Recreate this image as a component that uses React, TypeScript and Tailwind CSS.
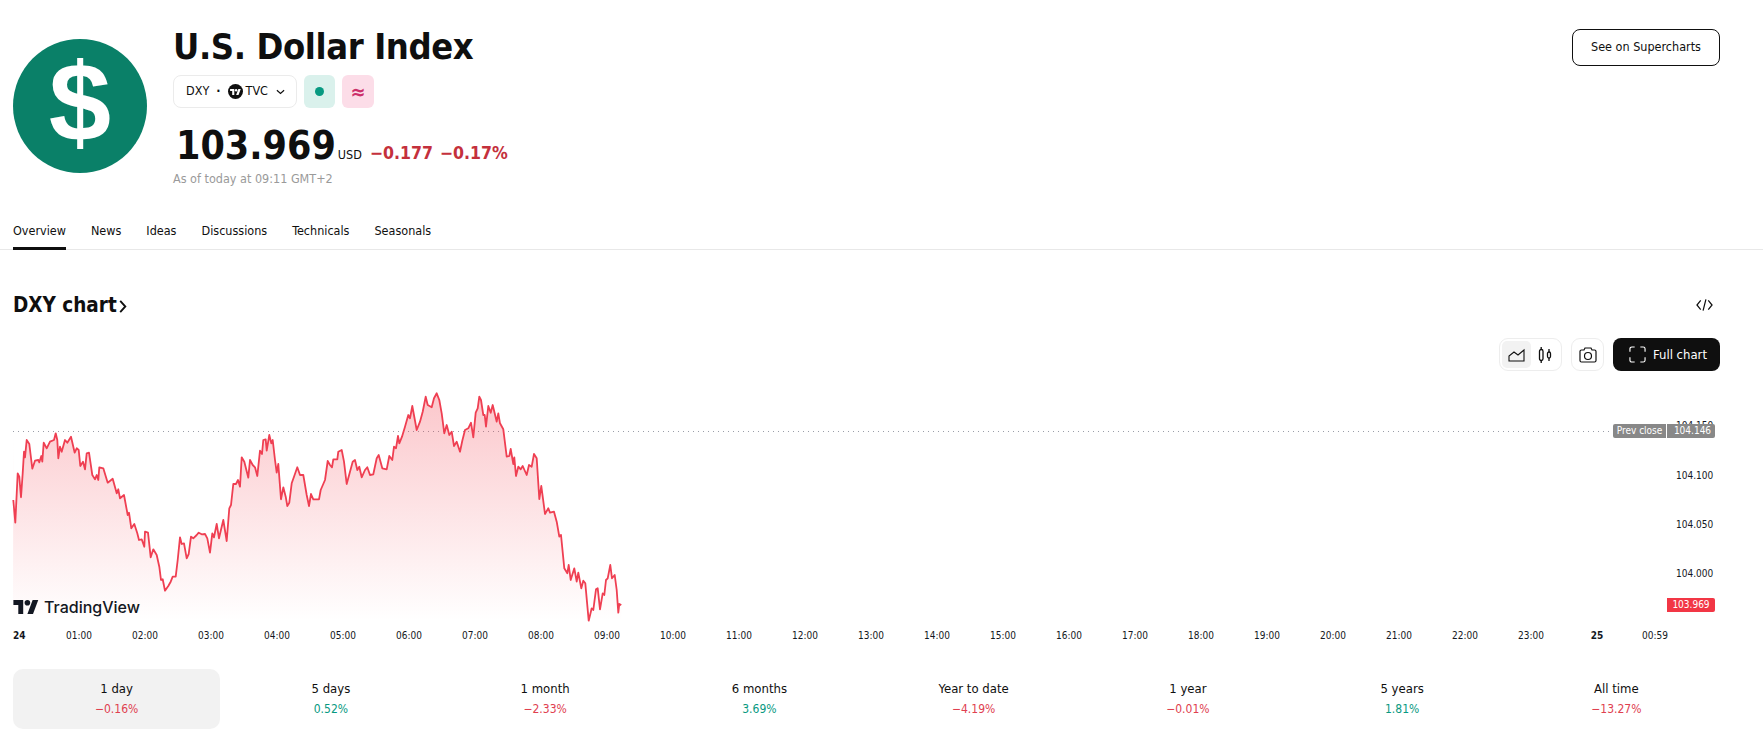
const FONT = "font-['DejaVu_Sans_Condensed','DejaVu_Sans',sans-serif]";

// traced from the reference, in px * 3 relative to the chart's top-left at x=0 and x=330
const LEFT = "40,155 40,360 46,428 53,280 58,290 63,352 68,280 72,215 75,232 80,180 88,192 97,266 105,242 115,240 118,247 124,228 127,245 131,188 140,205 150,185 162,180 167,160 172,180 175,235 180,200 185,215 195,180 202,188 213,170 224,218 230,205 236,210 241,258 249,245 255,268 260,220 267,218 277,285 285,298 290,285 295,300 298,262 310,265 323,308 338,296 350,340 355,328 360,355 372,345 383,405 387,398 394,445 403,432 412,460 417,480 425,478 433,500 435,455 444,458 452,532 460,508 470,525 478,560 483,600 488,598 495,632 505,618 512,605 518,590 527,590 533,540 540,472 545,492 552,490 560,535 566,522 573,470 580,475 590,465 596,458 605,463 615,462 622,475 630,518 637,460 642,472 650,432 657,475 670,420 680,483 688,385 693,375 700,312 708,312 714,300 720,320 725,232 733,245 745,293 750,240 758,255 765,262 772,288 780,212 786,222 790,180 797,178 800,212 808,165 814,190 818,180 825,240 830,278 835,252 843,358 850,322 857,350 862,378 868,368 875,310 882,290 892,262 900,285 910,285 920,345 927,378 933,342 940,358 957,358 962,330 975,300 983,243";
const RIGHT = "0,255 6,262 10,238 22,238 25,215 35,210 42,245 50,312 60,275 68,245 75,240 82,270 88,260 95,292 105,270 112,262 120,285 130,283 140,235 146,225 157,265 170,268 178,228 187,240 192,200 198,205 204,168 208,190 216,170 225,140 235,105 240,115 247,78 260,150 270,125 278,95 287,50 293,75 305,82 312,55 320,40 328,60 335,100 343,160 350,135 358,165 365,155 372,198 380,185 390,215 397,182 405,150 415,145 423,128 430,172 437,98 443,85 448,50 453,60 460,105 464,105 468,140 475,78 482,98 488,75 500,125 505,100 510,130 520,148 530,230 538,228 542,207 550,252 553,232 558,288 565,260 572,268 578,258 590,285 597,255 605,260 612,222 620,235 628,357 634,318 645,402 655,385 660,398 672,395 680,425 688,470 693,465 703,565 712,580 716,555 722,600 733,565 740,605 745,578 754,625 760,602 766,610 776,722 785,685 790,690 798,628 803,625 810,688 818,640 823,645 828,600 833,595 841,555 846,595 854,585 860,630 865,698 868,672 874,675";

const toPts = (s: string, dx: number) =>
  s.split(" ").map((p) => {
    const [x, y] = p.split(",").map(Number);
    return `${(dx + x / 3).toFixed(1)},${(y / 3).toFixed(1)}`;
  });
const LINE = [...toPts(LEFT, 0), ...toPts(RIGHT, 330)];

const TABS = ["Overview", "News", "Ideas", "Discussions", "Technicals", "Seasonals"];
const TIMES = ["01:00","02:00","03:00","04:00","05:00","06:00","07:00","08:00","09:00","10:00","11:00","12:00","13:00","14:00","15:00","16:00","17:00","18:00","19:00","20:00","21:00","22:00","23:00"];
const RANGES = [
  { label: "1 day", value: "−0.16%", up: false },
  { label: "5 days", value: "0.52%", up: true },
  { label: "1 month", value: "−2.33%", up: false },
  { label: "6 months", value: "3.69%", up: true },
  { label: "Year to date", value: "−4.19%", up: false },
  { label: "1 year", value: "−0.01%", up: false },
  { label: "5 years", value: "1.81%", up: true },
  { label: "All time", value: "−13.27%", up: false },
];

function TvLogo({ className }: { className: string }) {
  return (
    <svg viewBox="0 4 36 20" className={className} fill="currentColor">
      <path d="M14 24H7V11H0V4h14v20zM28 24h-8l7.5-20h8L28 24z" />
      <circle cx="20" cy="8" r="4" />
    </svg>
  );
}

function Chart() {
  return (
    <div className="relative mt-[9px] h-[250px] w-full">
      <svg viewBox="0 0 1763 250" className="absolute inset-0 h-[250px] w-full">
        <defs>
          <linearGradient id="area" x1="0" y1="0" x2="0" y2="1">
            <stop offset="0%" stopColor="#f23645" stopOpacity="0.28" />
            <stop offset="100%" stopColor="#f23645" stopOpacity="0" />
          </linearGradient>
        </defs>
        <line x1="13" x2="1613" y1="51.5" y2="51.5" stroke="#9a9ea8" strokeDasharray="1 4" />
        <polygon points={`13,240 ${LINE.join(" ")} 621.5,240`} fill="url(#area)" />
        <polyline points={LINE.slice(1).join(" ")} fill="none" stroke="#ef3f52" strokeWidth="1.8" strokeLinejoin="round" />
      </svg>
      <div className="absolute left-[13px] top-[219px] flex items-center gap-[5px] text-[#131722]">
        <TvLogo className="h-[14px] w-[26px]" />
        <span className="font-['Inter',sans-serif] text-[16px] font-medium leading-none">TradingView</span>
      </div>
      <span className="absolute left-[1676px] top-[41px] text-[10px] leading-none text-[#131722]">104.150</span>
      <div className="absolute left-[1613px] top-[44px] flex h-[14px] w-[102px] items-center overflow-hidden rounded-[2px] text-[10px] leading-none text-white">
        <span className="flex h-full w-[53px] items-center justify-center bg-[#888888]">Prev close</span>
        <span className="ml-px flex h-full flex-1 items-center justify-center bg-[#888888] pl-[3px]">104.146</span>
      </div>
      <span className="absolute left-[1676px] top-[91px] text-[10px] leading-none text-[#131722]">104.100</span>
      <span className="absolute left-[1676px] top-[140px] text-[10px] leading-none text-[#131722]">104.050</span>
      <span className="absolute left-[1676px] top-[189px] text-[10px] leading-none text-[#131722]">104.000</span>
      <div className="absolute left-[1667px] top-[218px] flex h-[14px] w-[48px] items-center justify-center rounded-r-[2px] bg-[#f23645] text-[10px] leading-none text-white">
        103.969
      </div>
    </div>
  );
}

export default function App() {
  return (
    <div className={`${FONT} h-[755px] w-full overflow-hidden bg-white text-[#0f0f0f]`}>
      <header className="flex h-[214px] items-start pl-[13px] pr-[43px]">
        <div className="mt-[39px] flex h-[134px] w-[134px] shrink-0 items-center justify-center rounded-full bg-[#0a8068] pb-[6px] font-['Liberation_Sans',sans-serif] text-[112px] font-bold leading-none text-white">
          $
        </div>
        <div className="ml-[26px] flex flex-col">
          <h1 className="mt-[25px] text-[36px] font-bold leading-[44px] tracking-[-0.4px]">U.S. Dollar Index</h1>
          <div className="mt-[6px] flex items-center gap-[7px]">
            <div className="flex h-[33px] w-[124px] items-center justify-center gap-[4px] rounded-[8px] border border-[#ebebeb] text-[12.5px]">
              <span className="ml-[1px]">DXY</span>
              <span className="mx-[3px] font-bold">·</span>
              <span className="flex h-[15px] w-[15px] items-center justify-center rounded-full bg-[#0f0f0f] text-white">
                <TvLogo className="h-[6px] w-[11px]" />
              </span>
              <span className="-ml-[1px]">TVC</span>
              <svg viewBox="0 0 10 6" className="ml-[4px] h-[6px] w-[9px]" fill="none" stroke="#0f0f0f" strokeWidth="1.3"><path d="M1 1l4 3.5L9 1" /></svg>
            </div>
            <div className="flex h-[33px] w-[31px] items-center justify-center rounded-[6px] bg-[#daf1ec]">
              <span className="h-[9px] w-[9px] rounded-full bg-[#089981]" />
            </div>
            <div className="flex h-[33px] w-[32px] items-center justify-center rounded-[6px] bg-[#fcdde8] text-[20px] font-bold leading-none text-[#cc2f6a]">
              ≈
            </div>
          </div>
          <div className="mt-[13px] flex items-baseline">
            <span className="ml-[3px] text-[39px] font-bold leading-[50px]">103.969</span>
            <span className="ml-[2px] text-[12.5px]">USD</span>
            <span className="ml-[8px] text-[17.5px] font-semibold text-[#c4303c]">−0.177</span>
            <span className="ml-[7px] text-[17.5px] font-semibold text-[#c4303c]">−0.17%</span>
          </div>
          <p className="-mt-[1px] text-[12.5px] leading-[18px] text-[#9a9a9a]">As of today at 09:11 GMT+2</p>
        </div>
        <button className="ml-auto mt-[29px] h-[37px] w-[148px] rounded-[8px] border border-[#0f0f0f] text-[12.5px]">
          See on Supercharts
        </button>
      </header>

      <nav className="flex h-[36px] gap-[25px] border-b border-[#e8e8e8] pl-[13px] text-[12.5px]">
        {TABS.map((tab, i) => (
          <span key={tab} className={`flex h-[36px] items-center ${i === 0 ? "border-b-[3px] border-[#0f0f0f] pt-[1px]" : "pb-[2px]"}`}>
            {tab}
          </span>
        ))}
      </nav>

      <section className="flex items-center justify-between pl-[13px] pr-[50px] pt-[38px]">
        <h2 className="flex items-center text-[20.5px] font-bold leading-[34px]">
          DXY chart
          <svg viewBox="0 0 8 14" className="ml-[2px] mt-[3px] h-[13px] w-[8px]" fill="none" stroke="#0f0f0f" strokeWidth="2"><path d="M1 1l5.5 6L1 13" /></svg>
        </h2>
        <svg viewBox="0 0 18 14" className="h-[14px] w-[17px]" fill="none" stroke="#0f0f0f" strokeWidth="1.3">
          <path d="M5 2L1 7l4 5M13 2l4 5-4 5M10.5 1l-3 12" />
        </svg>
      </section>

      <div className="mt-[16px] flex items-center justify-end pr-[43px]">
        <div className="flex h-[33px] w-[63px] items-center rounded-[9px] border border-[#ededed] p-[2px]">
          <span className="flex h-[27px] w-[29px] items-center justify-center rounded-[5px] bg-[#f2f2f2]">
            <svg viewBox="0 0 18 14" className="h-[14px] w-[18px]" fill="none" stroke="#0f0f0f" strokeWidth="1.1">
              <path d="M1 13V8l5-4 4 3 6-5v11H1zM1 13" />
            </svg>
          </span>
          <span className="flex flex-1 items-center justify-center">
            <svg viewBox="0 0 14 16" className="h-[16px] w-[14px]" fill="none" stroke="#0f0f0f" strokeWidth="1.3">
              <rect x="1.5" y="2.5" width="3.5" height="11" rx="1.7" />
              <rect x="9.5" y="5" width="3" height="6" rx="1.5" />
              <path d="M3.2 0v2.5M3.2 13.5V16M11 2v3M11 11v3" />
            </svg>
          </span>
        </div>
        <div className="ml-[9px] flex h-[33px] w-[33px] items-center justify-center rounded-[9px] border border-[#ededed]">
          <svg viewBox="0 0 18 16" className="h-[16px] w-[18px]" fill="none" stroke="#0f0f0f" strokeWidth="1.2">
            <path d="M1 4.5a1.5 1.5 0 0 1 1.5-1.5H5l1-2h6l1 2h2.5A1.5 1.5 0 0 1 17 4.5v9a1.5 1.5 0 0 1-1.5 1.5h-13A1.5 1.5 0 0 1 1 13.5z" />
            <circle cx="9" cy="9" r="3.5" />
          </svg>
        </div>
        <button className="ml-[9px] flex h-[33px] w-[107px] items-center justify-center gap-[7px] rounded-[8px] bg-[#0f0f0f] pl-[3px] text-[13px] text-white">
          <svg viewBox="0 0 18 18" className="h-[17px] w-[17px]" fill="none" stroke="#ffffff" strokeWidth="1.2">
            <path d="M1 6V3a2 2 0 0 1 2-2h3M12 1h3a2 2 0 0 1 2 2v3M17 12v3a2 2 0 0 1-2 2h-3M6 17H3a2 2 0 0 1-2-2v-3" />
          </svg>
          Full chart
        </button>
      </div>

      <Chart />

      <div className="-mt-[5px] flex h-[20px] items-center pl-[13px] text-[10px] text-[#131722]">
        <span className="w-[33px] font-bold">24</span>
        {TIMES.map((t) => (
          <span key={t} className="w-[66px] shrink-0 text-center">{t}</span>
        ))}
        <span className="w-[66px] shrink-0 text-center font-bold">25</span>
        <span className="w-[50px] shrink-0 text-center">00:59</span>
      </div>

      <div className="mx-[13px] mt-[24px] grid w-[1707px] grid-cols-8 gap-[7px]">
        {RANGES.map((r, i) => (
          <div key={r.label} className={`flex h-[60px] flex-col items-center justify-center rounded-[10px] ${i === 0 ? "bg-[#f2f2f2]" : ""}`}>
            <span className="text-[13px] leading-[20px]">{r.label}</span>
            <span className={`text-[12px] leading-[20px] ${r.up ? "text-[#089981]" : "text-[#e0404f]"}`}>{r.value}</span>
          </div>
        ))}
      </div>
    </div>
  );
}
